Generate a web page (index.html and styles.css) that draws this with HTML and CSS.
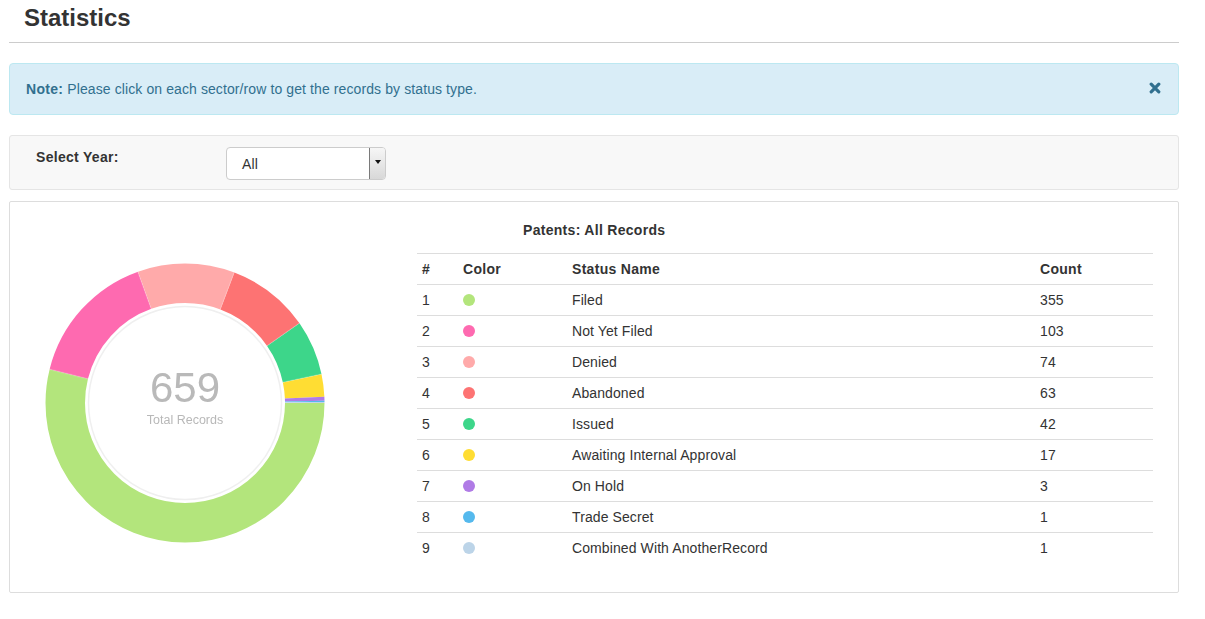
FILE: index.html
```html
<!DOCTYPE html>
<html>
<head>
<meta charset="utf-8">
<title>Statistics</title>
<link rel="stylesheet" href="styles.css">
</head>
<body>
<div class="page">
  <h3 class="title">Statistics</h3>
  <hr class="rule">

  <div class="alert">
    <div class="alert-text"><strong>Note:</strong> Please click on each sector/row to get the records by status type.</div>
    <svg class="close" width="12" height="12" viewBox="0 0 12 12"><path d="M2.2 2.2 L9.8 9.8 M9.8 2.2 L2.2 9.8" stroke="#31708f" stroke-width="3.2" stroke-linecap="round" fill="none"/></svg>
  </div>

  <div class="well">
    <label class="year-label">Select Year:</label>
    <div class="select">
      <span class="select-value">All</span>
      <span class="select-btn"><span class="caret"></span></span>
    </div>
  </div>

  <div class="panel">
    <div class="chart-col">
      <svg class="donut" width="280" height="280" viewBox="0 0 280 280">
        <g fill="none" stroke-width="39.5">
          <circle cx="140" cy="140" r="119.75" stroke="#b3e57c" stroke-dasharray="405.33 752.42" stroke-dashoffset="0"/>
          <circle cx="140" cy="140" r="119.75" stroke="#fe6ab0" stroke-dasharray="117.60 752.42" stroke-dashoffset="-405.33"/>
          <circle cx="140" cy="140" r="119.75" stroke="#ffaaaa" stroke-dasharray="84.49 752.42" stroke-dashoffset="-522.93"/>
          <circle cx="140" cy="140" r="119.75" stroke="#fd7373" stroke-dasharray="71.93 752.42" stroke-dashoffset="-607.42"/>
          <circle cx="140" cy="140" r="119.75" stroke="#3dd68a" stroke-dasharray="47.95 752.42" stroke-dashoffset="-679.35"/>
          <circle cx="140" cy="140" r="119.75" stroke="#ffdd33" stroke-dasharray="19.41 752.42" stroke-dashoffset="-727.30"/>
          <circle cx="140" cy="140" r="119.75" stroke="#b07be6" stroke-dasharray="3.43 752.42" stroke-dashoffset="-746.71"/>
          <circle cx="140" cy="140" r="119.75" stroke="#55b9ed" stroke-dasharray="1.14 752.42" stroke-dashoffset="-750.14"/>
          <circle cx="140" cy="140" r="119.75" stroke="#bcd4e8" stroke-dasharray="1.14 752.42" stroke-dashoffset="-751.28"/>
        </g>
        <g stroke="#ffffff" stroke-width="0.6" opacity="0.35">
          <line x1="240" y1="140" x2="280" y2="140" transform="rotate(193.93 140 140)"/>
          <line x1="240" y1="140" x2="280" y2="140" transform="rotate(250.20 140 140)"/>
          <line x1="240" y1="140" x2="280" y2="140" transform="rotate(290.62 140 140)"/>
          <line x1="240" y1="140" x2="280" y2="140" transform="rotate(325.04 140 140)"/>
          <line x1="240" y1="140" x2="280" y2="140" transform="rotate(347.98 140 140)"/>
        </g>
        <circle cx="140" cy="140" r="96.5" fill="#ffffff" stroke="#efefef" stroke-width="1.5"/>
        <text class="donut-num" x="140" y="139" text-anchor="middle">659</text>
        <text class="donut-label" x="140" y="161" text-anchor="middle">Total Records</text>
      </svg>
    </div>
    <div class="table-col">
      <div class="table-title">Patents: All Records</div>
      <table class="stats">
        <thead>
          <tr><th class="w-num">#</th><th class="w-color">Color</th><th class="w-name">Status Name</th><th class="w-count">Count</th></tr>
        </thead>
        <tbody>
          <tr><td>1</td><td><span class="dot c1"></span></td><td>Filed</td><td>355</td></tr>
          <tr><td>2</td><td><span class="dot c2"></span></td><td>Not Yet Filed</td><td>103</td></tr>
          <tr><td>3</td><td><span class="dot c3"></span></td><td>Denied</td><td>74</td></tr>
          <tr><td>4</td><td><span class="dot c4"></span></td><td>Abandoned</td><td>63</td></tr>
          <tr><td>5</td><td><span class="dot c5"></span></td><td>Issued</td><td>42</td></tr>
          <tr><td>6</td><td><span class="dot c6"></span></td><td>Awaiting Internal Approval</td><td>17</td></tr>
          <tr><td>7</td><td><span class="dot c7"></span></td><td>On Hold</td><td>3</td></tr>
          <tr><td>8</td><td><span class="dot c8"></span></td><td>Trade Secret</td><td>1</td></tr>
          <tr><td>9</td><td><span class="dot c9"></span></td><td>Combined With AnotherRecord</td><td>1</td></tr>
        </tbody>
      </table>
    </div>
  </div>
</div>
</body>
</html>
```

FILE: styles.css
```css
* { box-sizing: border-box; }
html, body { margin: 0; padding: 0; background: #fff; }
body {
  font-family: "Liberation Sans", Arial, Helvetica, sans-serif;
  font-size: 14px;
  line-height: 20px;
  color: #333;
  letter-spacing: 0.1px;
}
strong, th, .year-label, .table-title { letter-spacing: 0.3px; }
.page {
  width: 1170px;
  margin-left: 9px;
}
.title {
  margin: 0;
  padding: 5px 0 0 15px;
  font-size: 24px;
  line-height: 26px;
  font-weight: bold;
  color: #333;
  letter-spacing: 0;
}
.rule {
  margin: 11px 0 0 0;
  border: 0;
  border-top: 1px solid #cccccc;
  height: 0;
}
.alert {
  margin-top: 20px;
  display: flex;
  align-items: center;
  justify-content: space-between;
  padding: 15px 17px 15px 16px;
  background: #d9edf7;
  border: 1px solid #bce8f1;
  border-radius: 4px;
  color: #31708f;
  height: 52px;
}
.alert strong { font-weight: bold; }
.close { display: block; margin-bottom: 3px; }

.well {
  margin-top: 20px;
  display: flex;
  align-items: flex-start;
  background: #f8f8f8;
  border: 1px solid #e5e5e5;
  border-radius: 3px;
  padding: 11px 0 9px 26px;
  height: 55px;
}
.year-label {
  font-weight: bold;
  width: 190px;
  line-height: 20px;
}
.select {
  width: 160px;
  height: 33px;
  display: flex;
  align-items: stretch;
  background: #fff;
  border: 1px solid #cccccc;
  border-radius: 4px;
  overflow: hidden;
}
.select-value {
  flex: 1;
  padding-left: 15px;
  line-height: 32px;
  font-size: 14px;
  color: #333;
}
.select-btn {
  width: 17px;
  border: 1px solid #7a7a7a;
  background: linear-gradient(#f6f6f6, #d8d8d8);
  display: flex;
  justify-content: center;
  padding-top: 12px;
  margin: -1px -1px -1px 0;
}
.caret {
  width: 0;
  height: 0;
  border-left: 3.5px solid transparent;
  border-right: 3.5px solid transparent;
  border-top: 4px solid #111;
}

.panel {
  margin-top: 11px;
  display: flex;
  border: 1px solid #dddddd;
  border-radius: 2px;
}
.chart-col {
  width: 407px;
  padding: 61px 0 0 35px;
}
.donut { display: block; }
.donut-num {
  font-family: "Liberation Sans", Arial, sans-serif;
  font-size: 42px;
  fill: #b9b9b9;
  letter-spacing: 0;
}
.donut-label {
  font-family: "Liberation Sans", Arial, sans-serif;
  font-size: 12.5px;
  fill: #b8b8b8;
  letter-spacing: 0;
}
.table-col {
  width: 736px;
  padding: 18px 0 29px 0;
}
.table-title {
  font-weight: bold;
  padding-left: 106px;
  line-height: 20px;
  margin-bottom: 13px;
}
.stats {
  width: 736px;
  border-collapse: collapse;
  table-layout: fixed;
}
.stats th, .stats td {
  padding: 5px;
  line-height: 20px;
  text-align: left;
  vertical-align: middle;
  border-top: 1px solid #dddddd;
}
.stats th { font-weight: bold; }
.w-num { width: 41px; }
.w-color { width: 109px; }
.w-name { width: 468px; }
.w-count { width: 118px; }
.dot {
  display: inline-block;
  width: 12px;
  height: 12px;
  border-radius: 50%;
  vertical-align: -1px;
}
.c1 { background: #b3e57c; }
.c2 { background: #fe6ab0; }
.c3 { background: #ffaaaa; }
.c4 { background: #fd7373; }
.c5 { background: #3dd68a; }
.c6 { background: #ffdd33; }
.c7 { background: #b07be6; }
.c8 { background: #55b9ed; }
.c9 { background: #bcd4e8; }
```
